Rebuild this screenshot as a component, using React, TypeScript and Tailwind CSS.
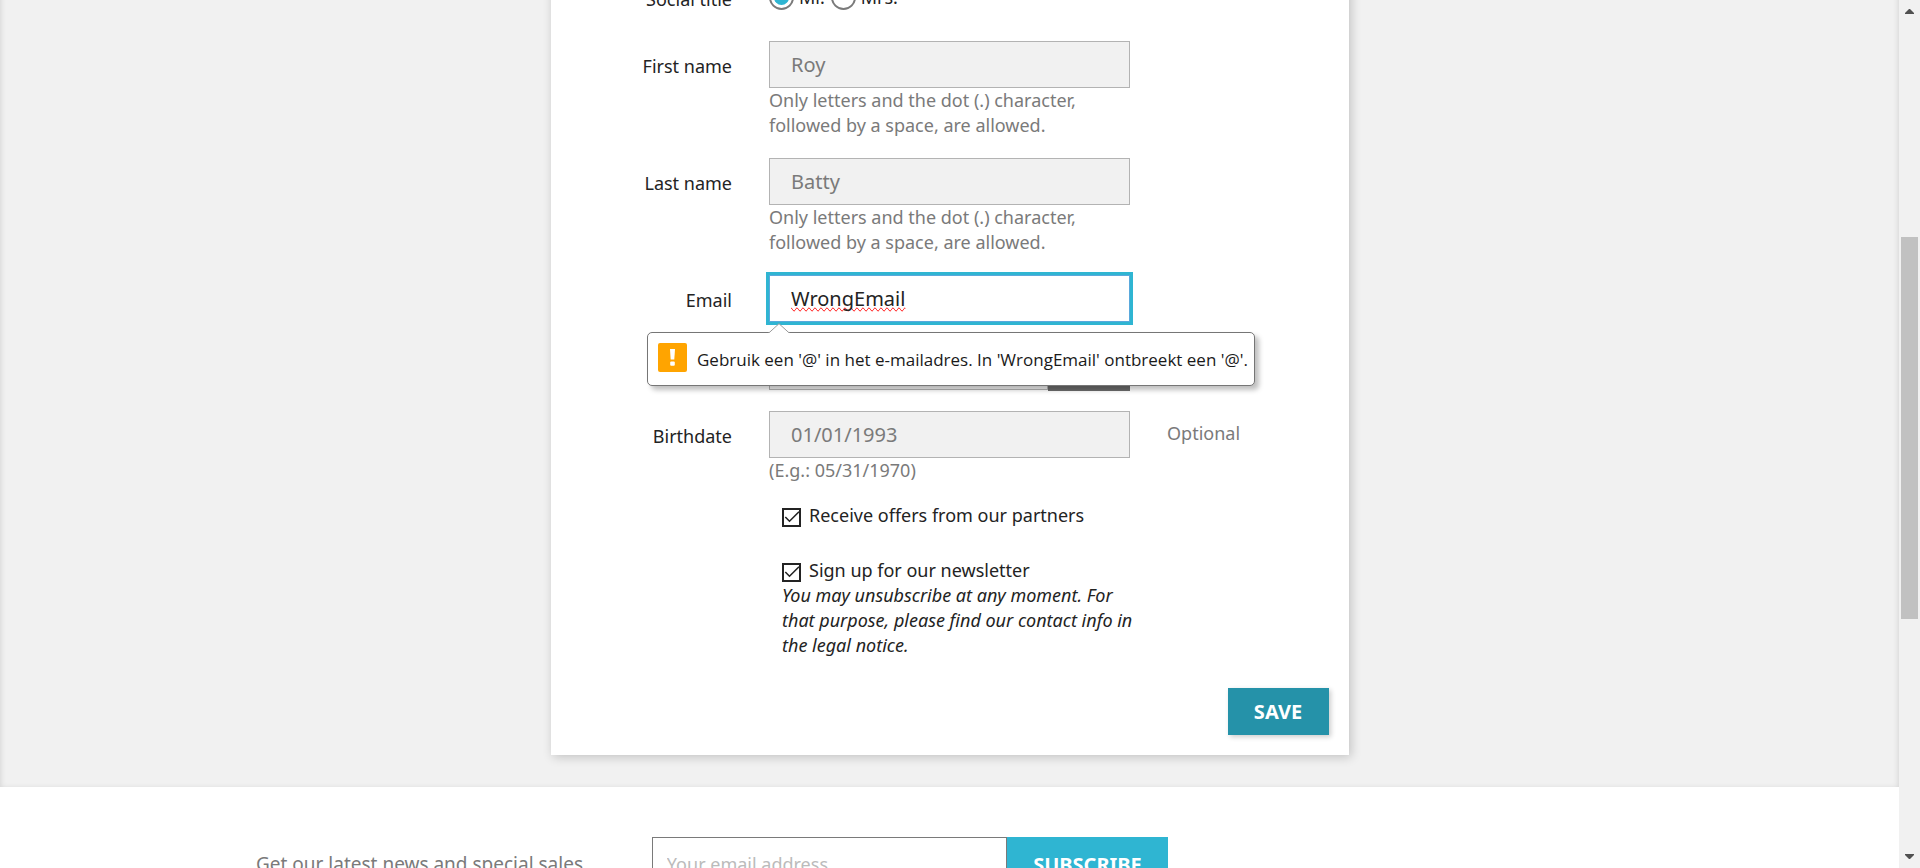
import type { ReactNode } from "react";

const fieldClass =
  "block h-[47px] w-full border border-[#b3b3b3] bg-[#f1f1f1] px-[21px] text-[20px] text-[#7a7a7a] outline-none";

type RowProps = {
  label?: string;
  htmlFor?: string;
  comment?: string;
  children: ReactNode;
};

function Row({ label, htmlFor, comment, children }: RowProps) {
  return (
    <div className="mb-5 grid grid-cols-4">
      <div className="px-[18px] pt-[13px] text-right">
        {label && <label htmlFor={htmlFor}>{label}</label>}
      </div>
      <div className="col-span-2 px-[19px]">{children}</div>
      <div className="px-[18px] pt-[10px] text-[#7a7a7a]">{comment}</div>
    </div>
  );
}

function NameHint() {
  return (
    <p className="text-[#7a7a7a]">
      Only letters and the dot (.) character, followed by a space, are allowed.
    </p>
  );
}

function Title({ id, text, checked }: { id: string; text: string; checked?: boolean }) {
  return (
    <label htmlFor={id} className="flex items-center gap-[5px]">
      <span className="grid size-[25px] place-items-center">
        <input
          id={id}
          type="radio"
          name="title"
          defaultChecked={checked}
          className="peer col-start-1 row-start-1 size-[25px] appearance-none rounded-full border-2 border-[#7a7a7a] bg-white"
        />
        <span className="col-start-1 row-start-1 hidden size-[15px] rounded-full bg-[#2fb5d2] peer-checked:block" />
      </span>
      {text}
    </label>
  );
}

function Check({ id, text }: { id: string; text: string }) {
  return (
    <label htmlFor={id} className="flex gap-2">
      <span className="mt-[5px] grid size-[19px]">
        <input
          id={id}
          type="checkbox"
          defaultChecked
          className="peer col-start-1 row-start-1 size-[19px] appearance-none border-2 border-[#232323] bg-white"
        />
        <svg
          viewBox="0 0 19 19"
          className="pointer-events-none col-start-1 row-start-1 hidden size-[19px] peer-checked:block"
          fill="none"
          stroke="#232323"
          strokeWidth="1.6"
        >
          <path d="M3.3 9 7.5 13.2 17 3.8" />
        </svg>
      </span>
      <span>{text}</span>
    </label>
  );
}

function ValidationBubble() {
  return (
    <div
      role="alert"
      className="absolute top-[57px] -left-[122px] z-10 flex h-[54px] items-center rounded-[5px] border border-[#767676] bg-white pr-[6px] pl-[10px] whitespace-nowrap shadow-[4px_4px_5px_rgba(0,0,0,0.25)]"
    >
      <svg
        viewBox="0 0 22 11"
        className="absolute -top-[10px] left-[120px] h-[11px] w-[22px]"
        fill="#fff"
      >
        <path d="M0 11 1 9.5 11 .7 21 9.5 22 11Z" />
        <path d="M1 9.8 11 .7 21 9.8" fill="none" stroke="#9a9a9a" />
      </svg>
      <svg viewBox="0 0 29 29" className="mb-1 size-[29px]">
        <rect width="29" height="29" rx="2" fill="#ffa400" />
        <path d="M12 6h5l-.7 10.5h-3.6Z" fill="#fff" />
        <rect x="12.2" y="18.6" width="4.6" height="4.2" rx="1" fill="#fff" />
      </svg>
      <span className="ml-[10px] font-['Open_Sans',sans-serif] text-[17px] text-[#1a1a1a]">
        Gebruik een '@' in het e-mailadres. In 'WrongEmail' ontbreekt een '@'.
      </span>
    </div>
  );
}

function ScrollBar() {
  return (
    <div aria-hidden="true" className="flex w-[21px] shrink-0 flex-col items-center bg-[#f1f1f1] py-[9px]">
      <svg viewBox="0 0 9 5" className="h-[5px] w-[9px]" fill="#505050">
        <path d="M0 5V4L4 0h1l4 4v1Z" />
      </svg>
      <div className="flex w-full flex-1 flex-col items-center">
        <div className="basis-[223px]" />
        <div className="h-[382px] w-[17px] bg-[#c1c1c1]" />
      </div>
      <svg viewBox="0 0 9 5" className="h-[5px] w-[9px]" fill="#505050">
        <path d="M0 0v1l4 4h1l4-4V0Z" />
      </svg>
    </div>
  );
}

export default function App() {
  return (
    <div className="flex h-screen overflow-hidden bg-white font-['Noto_Sans',sans-serif] text-[18px] leading-[25px] text-[#232323]">
      <div className="min-w-0 flex-1">
        <main className="-mt-[26px] bg-[#f1f1f1] pb-8 shadow-[inset_0_2px_6px_rgba(0,0,0,0.15)]">
          <form
            noValidate
            className="mx-auto max-w-[798px] bg-white pb-5 shadow-[2px_2px_10px_rgba(0,0,0,0.2)]"
          >
            <Row label="Social title">
              <div className="flex h-[47px] items-center gap-[6px]">
                <Title id="mr" text="Mr." checked />
                <Title id="mrs" text="Mrs." />
              </div>
            </Row>
            <Row label="First name" htmlFor="first">
              <input id="first" defaultValue="Roy" className={fieldClass} />
              <NameHint />
            </Row>
            <Row label="Last name" htmlFor="last">
              <input id="last" defaultValue="Batty" className={fieldClass} />
              <NameHint />
            </Row>
            <Row label="Email" htmlFor="email">
              <div className="relative">
                <input
                  id="email"
                  type="text"
                  inputMode="email"
                  spellCheck={false}
                  defaultValue="WrongEmail"
                  className="block h-[47px] w-full border border-[#5aa9dc] bg-white px-[21px] text-[20px] text-[#232323] outline-3 outline-[#2fb5d2] [text-decoration-line:spelling-error]"
                />
                <ValidationBubble />
              </div>
            </Row>
            <Row>
              <div className="flex">
                <input
                  type="password"
                  aria-label="Password"
                  className="h-[48px] min-w-0 flex-1 border border-[#b3b3b3] bg-[#f1f1f1] px-[21px]"
                />
                <button
                  type="button"
                  aria-label="Show password"
                  className="h-[49px] w-[82px] bg-[#6c6c6c]"
                />
              </div>
            </Row>
            <Row label="Birthdate" htmlFor="birth" comment="Optional">
              <input id="birth" defaultValue="01/01/1993" className={fieldClass} />
              <p className="text-[#7a7a7a]">(E.g.: 05/31/1970)</p>
            </Row>
            <Row>
              <div className="pl-[13px]">
                <Check id="offers" text="Receive offers from our partners" />
              </div>
            </Row>
            <Row>
              <div className="py-[10px] pl-[13px]">
                <Check id="newsletter" text="Sign up for our newsletter" />
                <p className="-mr-2 italic">
                  You may unsubscribe at any moment. For that purpose, please find our contact
                  info in the legal notice.
                </p>
              </div>
            </Row>
            <div className="flex justify-end pr-5">
              <button
                type="submit"
                className="h-[47px] w-[101px] bg-[#2592a9] text-[20px] font-bold text-white shadow-[2px_2px_5px_rgba(0,0,0,0.2)]"
              >
                SAVE
              </button>
            </div>
          </form>
        </main>
        <footer className="mx-auto max-w-[1425px] pt-[50px]">
          <form className="grid w-2/3 grid-cols-12">
            <label
              htmlFor="subscribe"
              className="col-span-5 px-[19px] pt-[15px] text-[19px] whitespace-nowrap text-[#7a7a7a]"
            >
              Get our latest news and special sales
            </label>
            <div className="col-span-7 flex px-[19px]">
              <input
                id="subscribe"
                type="email"
                placeholder="Your email address"
                className="h-[54px] min-w-0 flex-1 border border-[#7a7a7a] px-[14px] placeholder:text-[#bbbbbb]"
              />
              <button
                type="submit"
                className="h-[54px] w-[161px] bg-[#2fb5d2] text-[20px] font-bold text-white"
              >
                SUBSCRIBE
              </button>
            </div>
          </form>
        </footer>
      </div>
      <ScrollBar />
    </div>
  );
}
